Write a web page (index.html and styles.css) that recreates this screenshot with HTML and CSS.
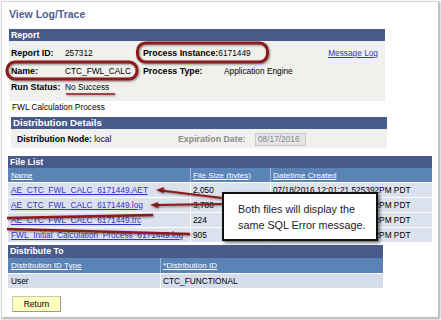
FILE: index.html
```html
<!DOCTYPE html>
<html lang="en">
<head>
    <meta charset="UTF-8">
    <title>View Log/Trace</title>
    <link rel="stylesheet" href="styles.css">
</head>
<body>
    <div class="frame">
        <h1 class="page-title">View Log/Trace</h1>

        <div class="group report">
            <div class="group-head">Report</div>
            <div class="report-body">
                <span class="lbl">Report ID:</span>
                <span>257312</span>
                <span class="lbl span2">Process Instance:<span class="val">6171449</span></span>
                <a href="#" class="link">Message Log</a>

                <span class="lbl">Name:</span>
                <span>CTC_FWL_CALC</span>
                <span class="lbl">Process Type:</span>
                <span class="span2">Application Engine</span>

                <span class="lbl">Run Status:</span>
                <span>No Success</span>
            </div>
        </div>
        <p class="desc">FWL Calculation Process</p>

        <div class="group dist">
            <div class="group-head">Distribution Details</div>
            <div class="dist-body">
                <span class="node"><b>Distribution Node:</b> local</span>
                <span class="lbl muted">Expiration Date:</span>
                <span class="date-box">08/17/2016</span>
            </div>
        </div>

        <div class="group files">
            <div class="group-head">File List</div>
            <table class="grid">
                <colgroup><col style="width:182px"><col style="width:80px"><col></colgroup>
                <thead>
                    <tr><th>Name</th><th>File Size (bytes)</th><th>Datetime Created</th></tr>
                </thead>
                <tbody>
                    <tr><td><a href="#" class="link">AE_CTC_FWL_CALC_6171449.AET</a></td><td>2,050</td><td>07/18/2016 12:01:21.525392PM PDT</td></tr>
                    <tr><td><a href="#" class="link">AE_CTC_FWL_CALC_6171449.log</a></td><td>3,788</td><td>07/18/2016 12:01:21.525392PM PDT</td></tr>
                    <tr><td><a href="#" class="link">AE_CTC_FWL_CALC_6171449.trc</a></td><td>224</td><td>07/18/2016 12:01:21.525392PM PDT</td></tr>
                    <tr><td><a href="#" class="link">FWL_Initial_Calculation_Process_6171449.log</a></td><td>905</td><td>07/18/2016 12:01:21.525392PM PDT</td></tr>
                </tbody>
            </table>
        </div>

        <div class="group dist-to">
            <div class="group-head">Distribute To</div>
            <table class="grid">
                <colgroup><col style="width:152px"><col></colgroup>
                <thead>
                    <tr><th>Distribution ID Type</th><th>*Distribution ID</th></tr>
                </thead>
                <tbody>
                    <tr><td>User</td><td>CTC_FUNCTIONAL</td></tr>
                </tbody>
            </table>
        </div>

        <button class="btn" type="button">Return</button>
    </div>

    <div class="callout">Both files will display the<br>same SQL Error message.</div>

    <svg class="marks" width="441" height="320" viewBox="0 0 441 320">
        <defs>
            <filter id="sh" x="-10%" y="-30%" width="130%" height="160%">
                <feDropShadow dx="1" dy="1" stdDeviation="0.8" flood-color="#000" flood-opacity="0.45"/>
            </filter>
        </defs>
        <g fill="none" stroke="#8c1a1a" filter="url(#sh)">
            <rect x="137.5" y="43" width="130" height="19" rx="8" stroke-width="3"/>
            <rect x="7" y="62" width="130" height="17" rx="8" stroke-width="3"/>
            <line x1="66" y1="94" x2="115" y2="94" stroke-width="1.6"/>
            <line x1="7" y1="218" x2="153" y2="215" stroke-width="2.4"/>
            <line x1="7" y1="229" x2="190" y2="234" stroke-width="2.4"/>
            <line x1="222" y1="198" x2="161" y2="190.5" stroke-width="2"/>
            <line x1="222" y1="204" x2="155" y2="205" stroke-width="2"/>
        </g>
        <g fill="#8c1a1a" filter="url(#sh)">
            <polygon points="156,190 164,187 163,193"/>
            <polygon points="150,205 158,202 158,208"/>
        </g>
    </svg>
</body>
</html>
```

FILE: styles.css
```css
* {
    box-sizing: border-box;
}
body {
    margin: 0;
    width: 441px;
    height: 320px;
    overflow: hidden;
    position: relative;
    background: #fff;
    font-family: "Liberation Sans", Arial, sans-serif;
    font-size: 8.3px;
    color: #000;
}
.frame {
    margin: 1px 0 0 1px;
    width: 438px;
    height: 317px;
    border: 1px solid #d6d6d6;
    border-right-color: #bdbdbd;
    border-bottom-color: #bdbdbd;
    box-shadow: 1px 1px 2px rgba(0, 0, 0, 0.35);
}
.page-title {
    margin: 6px 0 9px 7px;
    font-size: 10.5px;
    line-height: 12px;
    font-weight: bold;
    color: #4d6191;
}
.group-head {
    background: #4a5a8b;
    color: #fff;
    font-weight: bold;
    font-size: 8.8px;
    line-height: 12px;
    padding-left: 2px;
}
.link {
    color: #3333cc;
    text-decoration: underline;
}
.lbl {
    font-weight: bold;
    font-size: 8.8px;
}
.muted {
    color: #8a8a8a;
}

/* report */
.report {
    margin-left: 7px;
    width: 376px;
}
.report-body {
    background: #f0f1ec;
    padding: 6px 7px 4px 2px;
    display: grid;
    grid-template-columns: 54px 78px 81px 1fr auto;
    grid-template-rows: 18px 16px 16px;
    line-height: 12px;
}
.span2 {
    grid-column: span 2;
}
.val {
    font-weight: normal;
    font-size: 8.3px;
}
.desc {
    margin: 0 0 4px 10px;
    line-height: 12px;
}

/* distribution */
.dist {
    margin-left: 9px;
    width: 376px;
}
.dist .group-head {
    font-size: 9.7px;
}
.dist-body {
    background: #f0f1ec;
    height: 19px;
    display: flex;
    align-items: center;
    padding: 1px 0 0 6px;
}
.node {
    width: 161px;
}
.node b {
    font-size: 8.6px;
}
.dist-body .muted {
    width: 77px;
}
.date-box {
    width: 51px;
    height: 13px;
    line-height: 11px;
    padding-left: 2px;
    background: #e6e6e6;
    border: 1px solid #c9c9c9;
    color: #8a8a8a;
}

/* grids */
.files {
    margin: 8px 0 0 6px;
    width: 424px;
}
.dist-to {
    margin: 3px 0 0 6px;
    width: 375px;
}
.dist-to .group-head {
    line-height: 13px;
}
.grid {
    width: 100%;
    table-layout: fixed;
    border-collapse: separate;
    border-spacing: 0;
}
.grid th {
    background: #5a84b5;
    color: #fff;
    font-weight: normal;
    font-size: 8.1px;
    text-decoration: underline;
    text-align: left;
    height: 14px;
    padding: 0 0 0 2px;
    border-left: 1px solid #9fb6d4;
    white-space: nowrap;
    overflow: hidden;
}
.grid th:first-child,
.grid td:first-child {
    border-left: none;
    padding-left: 3px;
}
.grid td {
    background: #dce2ed;
    height: 15px;
    padding: 0 0 0 2px;
    border-top: 1px solid #fff;
    border-left: 1px solid #fff;
    white-space: nowrap;
    overflow: hidden;
}
.dist-to th {
    height: 15px;
}
.dist-to td {
    background: #d5dcea;
}

.btn {
    display: block;
    margin: 8px 0 0 10px;
    width: 49px;
    height: 16px;
    padding: 0;
    background: #ffffc0;
    border: 1px solid #c8c8b0;
    border-right-color: #9a9a8a;
    border-bottom-color: #9a9a8a;
    font-family: inherit;
    font-size: 8.5px;
    color: #000;
}

/* annotations */
.callout {
    position: absolute;
    left: 222px;
    top: 192px;
    width: 156px;
    height: 49px;
    padding: 7px 0 0 14px;
    background: #fff;
    border: 2px solid #111;
    box-shadow: 2px 2px 3px rgba(0, 0, 0, 0.5);
    font-size: 10.8px;
    line-height: 16px;
    color: #222;
}
.marks {
    position: absolute;
    left: 0;
    top: 0;
    pointer-events: none;
}
```
